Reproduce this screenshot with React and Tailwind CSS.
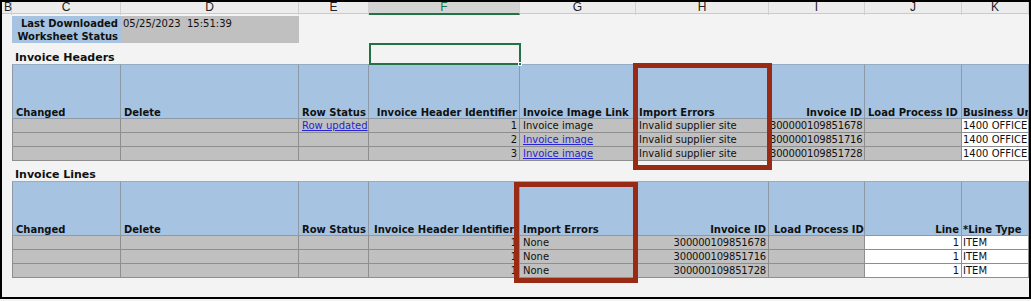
import React from 'react';

const COLS = 'grid grid-cols-[10px_109px_178px_70px_151px_116px_133px_96px_97px_67px]';
const LETTERS = ['B', 'C', 'D', 'E', 'F', 'G', 'H', 'I', 'J', 'K'];

const headerCols = [
  { h: 'Changed' },
  { h: 'Delete' },
  { h: 'Row Status' },
  { h: 'Invoice Header Identifier', right: true },
  { h: 'Invoice Image Link' },
  { h: 'Import Errors' },
  { h: 'Invoice ID', right: true },
  { h: 'Load Process ID' },
  { h: 'Business Unit', tight: true },
];

const headerRows = [
  ['', '', { v: 'Row updated', link: true }, { v: '1', right: true }, { v: 'Invoice image' }, { v: 'Invalid supplier site' }, { v: '300000109851678', num: true }, '', { v: '1400 OFFICE', white: true, tight: true }],
  ['', '', '', { v: '2', right: true }, { v: 'Invoice image', link: true }, { v: 'Invalid supplier site' }, { v: '300000109851716', num: true }, '', { v: '1400 OFFICE', white: true, tight: true }],
  ['', '', '', { v: '3', right: true }, { v: 'Invoice image', link: true }, { v: 'Invalid supplier site' }, { v: '300000109851728', num: true }, '', { v: '1400 OFFICE', white: true, tight: true }],
];

const lineCols = [
  { h: 'Changed' },
  { h: 'Delete' },
  { h: 'Row Status' },
  { h: 'Invoice Header Identifier', wide: true },
  { h: 'Import Errors' },
  { h: 'Invoice ID', right: true },
  { h: 'Load Process ID', wide: true },
  { h: 'Line', right: true },
  { h: '*Line Type', tight: true },
];

const lineRow = (id) => [
  '', '', '', { v: '1', right: true }, { v: 'None' }, { v: id, right: true, num: true }, '',
  { v: '1', right: true, white: true }, { v: 'ITEM', white: true, tight: true },
];
const lineRows = [lineRow('300000109851678'), lineRow('300000109851716'), lineRow('300000109851728')];

function HeadCell({ c, first }) {
  return (
    <div
      className={`h-[55px] flex items-end overflow-hidden whitespace-nowrap bg-[#a6c4e1] border-r border-b border-t border-t-[#95adc4] border-[#8d99a6] font-bold leading-[10px] ${first ? 'border-l' : ''} ${c.right ? 'justify-end pr-[2px]' : c.wide ? 'pl-[5px]' : c.tight ? 'pl-[1px]' : 'pl-[3px]'}`}
    >
      {c.h}
    </div>
  );
}

function DataCell({ c, first }) {
  const cell = typeof c === 'string' ? { v: c } : c;
  return (
    <div
      className={`h-[14px] overflow-hidden whitespace-nowrap leading-[14px] border-r border-b border-[#8e8e8e] ${first ? 'border-l' : ''} ${cell.white ? 'bg-white' : 'bg-[#c0c0c0]'} ${cell.num ? 'tracking-[-0.2px]' : ''} ${cell.right ? 'text-right pr-[2px]' : cell.tight || cell.num ? 'pl-[1px]' : 'pl-[3px]'}`}
    >
      {cell.link ? <span className="text-[#2424d4] underline">{cell.v}</span> : cell.v}
    </div>
  );
}

function Table({ cols, rows }) {
  return (
    <>
      <div className={COLS}>
        <div />
        {cols.map((c, i) => (
          <HeadCell key={i} c={c} first={i === 0} />
        ))}
      </div>
      {rows.map((r, ri) => (
        <div key={ri} className={COLS}>
          <div />
          {r.map((c, i) => (
            <DataCell key={i} c={c} first={i === 0} />
          ))}
        </div>
      ))}
    </>
  );
}

export default function App() {
  return (
    <div className="relative w-[1031px] h-[301px] bg-[#f3f3f3] text-[10px] text-[#111] font-['DejaVu_Sans',sans-serif]">
      <div className="w-[1031px] h-[299px] border-2 border-black flex flex-col overflow-hidden">
        {/* column letters */}
        <div className={`${COLS} h-[12px] bg-[#ececec] border-b border-[#cacaca] font-['Liberation_Sans',sans-serif] text-[12px] leading-[11px] text-[#222]`}>
          {LETTERS.map((l) => (
            <div
              key={l}
              className={`border-r border-[#d0d0d0] ${l === 'B' ? 'pl-[2px] text-left' : 'text-center'} ${l === 'F' ? 'bg-[#d3d3d3] border-b-2 border-b-[#217346] text-[#217346]' : ''}`}
            >
              {l}
            </div>
          ))}
        </div>
        <div className="h-[2px]" />

        {/* download status */}
        <div className={COLS}>
          <div />
          <div className="h-[14px] bg-[#a6c4e1] text-right pr-[3px] font-bold leading-[15px] whitespace-nowrap">Last Downloaded</div>
          <div className="h-[14px] bg-[#c0c0c0] pl-[2px] leading-[15px] whitespace-pre">05/25/2023  15:51:39</div>
        </div>
        <div className={COLS}>
          <div />
          <div className="h-[13px] bg-[#a6c4e1] text-right pr-[3px] font-bold leading-[13px] whitespace-nowrap">Worksheet Status</div>
          <div className="h-[13px] bg-[#c0c0c0]" />
        </div>

        {/* Invoice Headers title row */}
        <div className={`${COLS} h-[21px]`}>
          <div />
          <div className="col-span-3 flex items-end pl-[3px] pb-[1px] text-[11px] font-bold leading-[13px] whitespace-nowrap">Invoice Headers</div>
          <div className="relative w-[152px] h-[22px] border-2 border-[#217346]">
            <div className="absolute -right-[3px] -bottom-[3px] w-[4px] h-[4px] bg-[#217346] border border-white" />
          </div>
        </div>
        <Table cols={headerCols} rows={headerRows} />

        {/* Invoice Lines title row */}
        <div className={`${COLS} h-[20px]`}>
          <div />
          <div className="col-span-3 flex items-end pl-[3px] text-[11px] font-bold leading-[13px] whitespace-nowrap">Invoice Lines</div>
        </div>
        <Table cols={lineCols} rows={lineRows} />
      </div>

      {/* highlight boxes */}
      <div className="absolute left-[633px] top-[63px] w-[139px] h-[107px] border-[5px] border-[#992a14]" />
      <div className="absolute left-[514px] top-[182px] w-[124px] h-[101px] border-[5px] border-[#992a14]" />
    </div>
  );
}
